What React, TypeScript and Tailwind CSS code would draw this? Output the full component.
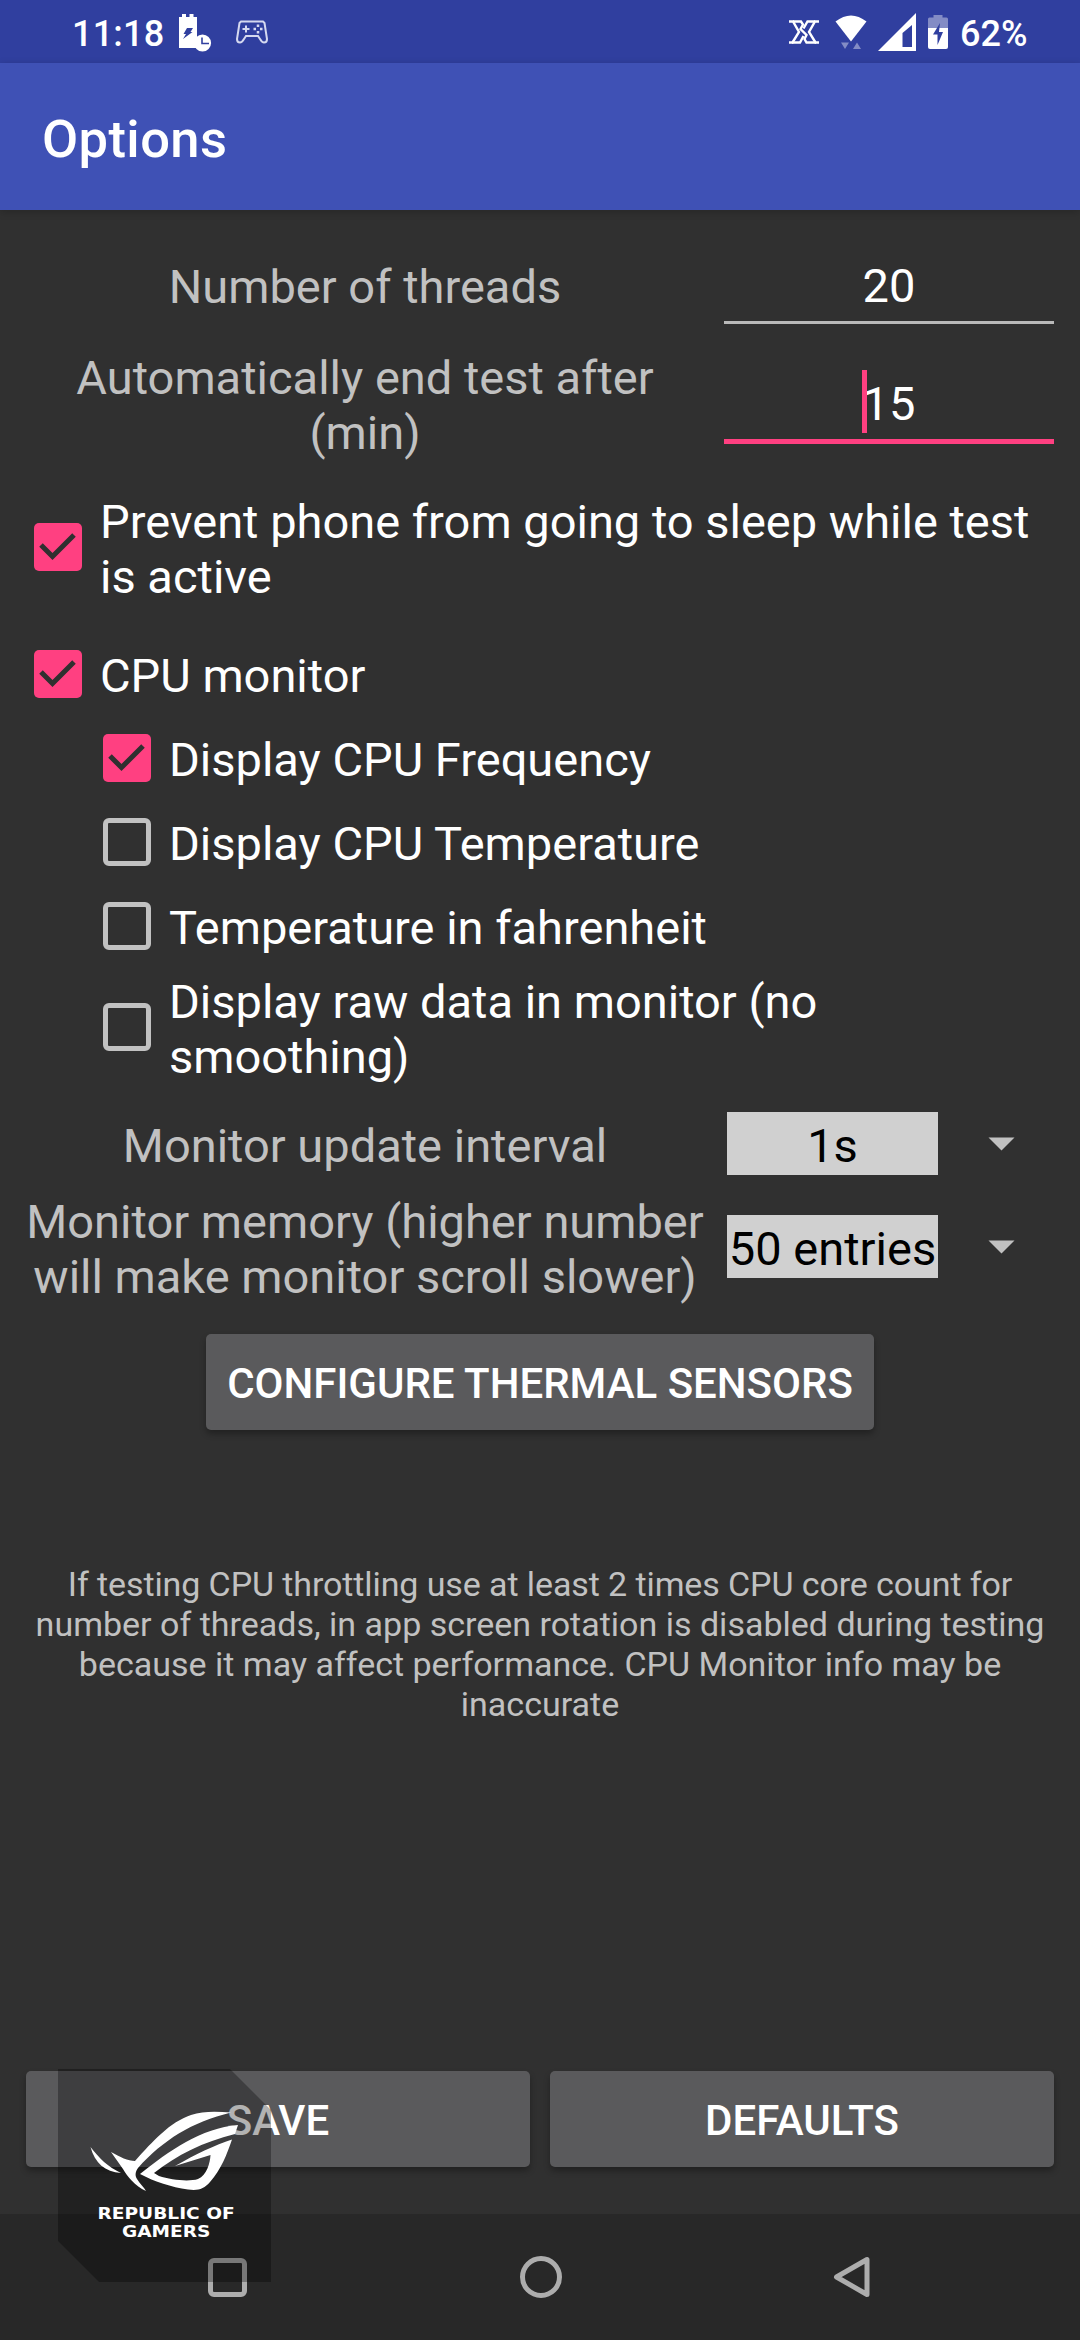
import React from "react";

function Check({ on }: { on?: boolean }) {
  return on ? (
    <span className="flex h-[48px] w-[48px] shrink-0 rounded-[5px] bg-[#ff4081]">
      <svg viewBox="0 0 48 48" className="h-full w-full" fill="none">
        <path d="M7 22 L18.500 33.500 L40 12" stroke="#303030" strokeWidth="5" />
      </svg>
    </span>
  ) : (
    <span className="h-[48px] w-[48px] shrink-0 rounded-[6px] border-[5.25px] border-[#c1c1c1]" />
  );
}

function CheckRow({
  on,
  tall,
  className,
  children,
}: {
  on?: boolean;
  tall?: boolean;
  className: string;
  children: React.ReactNode;
}) {
  return (
    <div className={`flex items-center text-white ${tall ? "h-[110px]" : "h-[84px]"} ${className}`}>
      <Check on={on} />
      <span className={`ml-[18px] ${tall ? "pt-[4px]" : "pt-[3px]"}`}>{children}</span>
    </div>
  );
}

function Spinner({ children }: { children: React.ReactNode }) {
  return (
    <div className="-ml-[3px] flex items-center">
      <div className="h-[63px] w-[211px] bg-[#d0d0d0] pt-[6px] text-center whitespace-nowrap text-black">{children}</div>
      <svg className="ml-[50px] h-[14px] w-[27px]" viewBox="0 0 27 14">
        <path d="M0.500 0.500 H26.500 L13.500 13.500 Z" fill="#c1c1c1" />
      </svg>
    </div>
  );
}

function Button({ className, children }: { className: string; children: React.ReactNode }) {
  return (
    <button
      className={`h-[96px] rounded-[5px] bg-[#5a5a5c] pt-[3px] text-[42px] leading-[50px] font-medium text-white shadow-[0_4px_6px_rgba(0,0,0,0.3)] ${className}`}
    >
      {children}
    </button>
  );
}

function StatusBar() {
  return (
    <div className="flex h-[63px] items-center bg-[#303f9f] text-[36px] leading-[42px] font-medium text-white">
      <span className="ml-[72px] w-[94px] pt-[4px] tracking-[0.2px]">11:18</span>
      <svg className="ml-[12px] h-[40px] w-[34px]" viewBox="0 0 34 40">
        <path d="M1 5 H4 V2 H8 V5 H11.500 V2 H15.500 V5 H19 V36 H1 Z" fill="#fff" />
        <path d="M9 16 H15 L12.500 20 H14.500 L5 27 L8 22 H5.500 Z" fill="#303f9f" />
        <circle cx="24.500" cy="31" r="8.600" fill="#fff" />
        <path d="M24 25.500 V31.500 H31" stroke="#303f9f" strokeWidth="1.600" fill="none" />
      </svg>
      <svg className="ml-[24px] h-[24px] w-[32px]" viewBox="0 0 32 24" fill="none" stroke="#d5d9f0" strokeWidth="2">
        <path d="M5 1.500 H27 L28.500 3 L31 19 Q31 22.500 28 22.500 Q26 22.500 24 19 L22 16 H10 L8 19 Q6 22.500 4 22.500 Q1 22.500 1 19 L3.500 3 Z" />
        <path d="M10 5.500 V12.500 M6.500 9 H13.500" />
        <path d="M22 4.500 V7 M22 11 V13.500 M17.500 9 H20 M24 9 H26.500" strokeWidth="2.500" />
      </svg>
      <svg className="ml-auto h-[24px] w-[30px]" viewBox="0 0 30 24" fill="none" stroke="#fff" strokeWidth="2.400">
        <path d="M0 1.500 H4 L10 12 L3.500 22.500 H0" />
        <path d="M30 1.500 H26 L20 12 L26.500 22.500 H30" />
        <path d="M4 1.500 H12 L14 4.500 L11.500 9 L17.500 15 L15.500 19 L17.500 22.500 H27" />
        <path d="M26 1.500 H18.500 L14.500 8.500 M3 22.500 H11 L14.500 16" />
      </svg>
      <svg className="ml-[16px] h-[36px] w-[32px]" viewBox="0 0 32 36">
        <path d="M0.500 7.500 Q16 -4.500 31.500 7.500 L16 27.500 Z" fill="#fff" />
        <path d="M6 28.500 H14 L10 35 Z M22 28.500 L26 35 H18 Z" fill="#838cc5" />
      </svg>
      <svg className="ml-[11px] h-[38px] w-[38px]" viewBox="0 0 38 38">
        <path fillRule="evenodd" d="M38 0 V38 H0 Z M34 12 L24.500 20 V34 H34 Z" fill="#fff" />
      </svg>
      <svg className="ml-[12px] h-[36px] w-[20px]" viewBox="0 0 20 36">
        <path d="M0 14 V5 Q0 3.500 1.500 3.500 H5.500 V1 H14.500 V3.500 H18.500 Q20 3.500 20 5 V14 Z" fill="#838cc5" />
        <path d="M0 14 H20 V33 Q20 35 18 35 H2 Q0 35 0 33 Z" fill="#fff" />
        <path d="M12 9 L5 20.500 H9.500 V31 L15 18 H11 Z" fill="#303f9f" />
      </svg>
      <span className="mr-[52px] ml-[12px] w-[68px] pt-[4px] whitespace-nowrap">62%</span>
    </div>
  );
}

function RogBadge() {
  return (
    <div className="absolute top-[2069px] left-[58px] h-[213px] w-[213px]">
      <svg viewBox="0 0 213 213" className="absolute inset-0 h-full w-full">
        <path d="M0 0 H172 L213 41 V213 H41 L0 172 Z" fill="#000" fillOpacity="0.3" />
        <g fill="#fff">
          <path d="M32.500 78 C41 89 50 98 63 104 C47 103 37 94 32.500 78 Z" />
          <path d="M53 83 C62 88 70 92 77 92 C95 72 112 53 133 46 C145 42 158 42.500 173 43.500 C134 53 105 71 80 99 C77 103 77 107 79 110 C82 115 86 118 88 122 C77 117 69 107 65 100 Z" />
          <path d="M180 56 L177 65 C145 73 119 86 96 104 L101 107 C113 111 131 113 140 110 C149 106 152 94 152.500 86 L117 97 C138 85 157 76 174 70.500 C169 85 163 101 152 113 C146 120 140 122 130 120.500 C113 118 97 113 82 105 C111 82 143 59 180 56 Z" />
        </g>
      </svg>
      <div className="absolute top-[136px] left-[38px] flex w-[140px] flex-col items-center font-['DejaVu_Sans'] text-[16px] leading-[18px] font-bold text-white">
        <span className="origin-center scale-x-[1.16] whitespace-nowrap">REPUBLIC OF</span>
        <span className="origin-center scale-x-[1.16] whitespace-nowrap">GAMERS</span>
      </div>
    </div>
  );
}

export default function App() {
  return (
    <div className="relative flex h-[2340px] w-[1080px] flex-col overflow-hidden bg-[#303030] font-[Roboto,sans-serif] text-[47px] leading-[55px] text-[#c1c1c1]">
      <StatusBar />
      <header className="flex h-[147px] items-center bg-[#3f51b5] pt-[5px] pl-[42px] text-[52.5px] font-medium tracking-[0.4px] text-white shadow-[0_2px_8px_rgba(0,0,0,0.2)]">
        Options
      </header>

      <main className="flex flex-1 flex-col">
        <div className="mt-[44px] flex h-[70px]">
          <div className="w-[730px] pt-[5px] text-center">Number of threads</div>
          <div className="ml-[-6px] h-[70px] w-[330px] border-b-[3px] border-[#b9b9b9] pt-[4px] text-center text-white">20</div>
        </div>
        <div className="mt-[26px] flex h-[110px]">
          <div className="w-[730px] px-[20px] text-center">
            Automatically end test after
            <br />
            (min)
          </div>
          <div className="relative ml-[-6px] h-[94px] w-[330px] border-b-[5px] border-[#ff4081] pt-[26px] text-center text-white">
            15
            <span className="absolute top-[20px] left-[138px] h-[63px] w-[5px] bg-[#ff4081]" />
          </div>
        </div>

        <CheckRow on tall className="mt-[32px] ml-[34px]">
          Prevent phone from going to sleep while test
          <br />
          is active
        </CheckRow>
        <CheckRow on className="mt-[30px] ml-[34px]">CPU monitor</CheckRow>
        <CheckRow on className="ml-[103px]">Display CPU Frequency</CheckRow>
        <CheckRow className="ml-[103px]">Display CPU Temperature</CheckRow>
        <CheckRow className="ml-[103px]">Temperature in fahrenheit</CheckRow>
        <CheckRow tall className="mt-[4px] ml-[103px]">
          Display raw data in monitor (no
          <br />
          smoothing)
        </CheckRow>

        <div className="mt-[30px] flex h-[63px] items-center">
          <div className="w-[730px] pt-[4px] text-center">Monitor update interval</div>
          <Spinner>1s</Spinner>
        </div>
        <div className="mt-[16px] flex h-[111px] items-center">
          <div className="w-[730px] pt-[5px] text-center whitespace-nowrap">
            Monitor memory (higher number
            <br />
            will make monitor scroll slower)
          </div>
          <Spinner>50 entries</Spinner>
        </div>

        <Button className="mt-[32px] w-[668px] self-center">CONFIGURE THERMAL SENSORS</Button>

        <p className="mt-[134px] text-center text-[34px] leading-[40px]">
          <span className="tracking-[-0.1px]">If testing CPU throttling use at least 2 times CPU core count for</span>
          <br />
          number of threads, in app screen rotation is disabled during testing
          <br />
          because it may affect performance. CPU Monitor info may be
          <br />
          inaccurate
        </p>

        <div className="mt-auto mb-[47px] flex gap-[20px] px-[26px]">
          <Button className="flex-1">SAVE</Button>
          <Button className="flex-1">DEFAULTS</Button>
        </div>
      </main>

      <nav className="flex h-[126px] shrink-0 items-center justify-between bg-[#282828] px-[208px]">
        <span className="h-[39px] w-[39px] rounded-[6px] border-[5px] border-[#adadad]" />
        <span className="ml-[2px] h-[42px] w-[42px] rounded-full border-[5px] border-[#adadad]" />
        <svg className="h-[42px] w-[40px]" viewBox="0 0 40 42">
          <path d="M35 3.500 V38.500 L4.500 21 Z" fill="none" stroke="#adadad" strokeWidth="5" strokeLinejoin="round" />
        </svg>
      </nav>

      <RogBadge />
    </div>
  );
}
